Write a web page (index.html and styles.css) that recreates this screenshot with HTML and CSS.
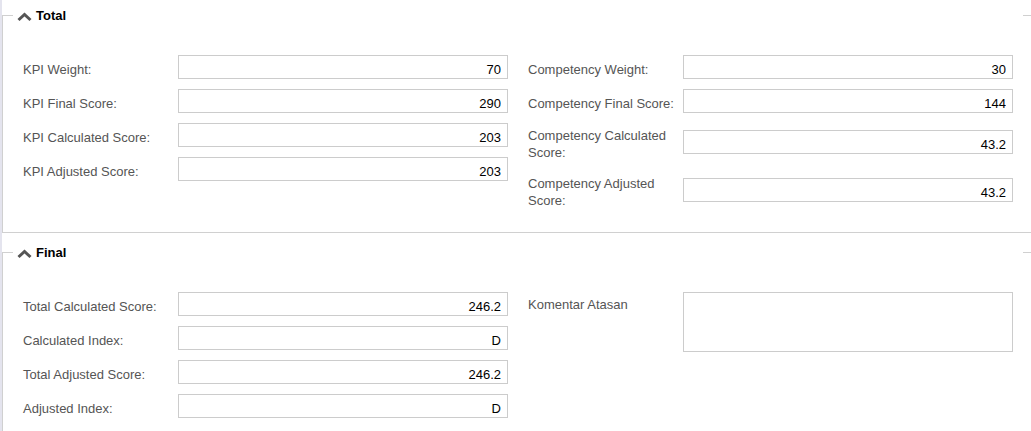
FILE: index.html
```html
<!DOCTYPE html>
<html lang="id">
<head>
  <meta charset="UTF-8" />
  <meta name="viewport" content="width=device-width, initial-scale=1.0"/>
  <title>Appraisal - Total</title>
  <link rel="stylesheet" href="styles.css">
</head>
<body>
  <div class="page">

    <!-- Total -->
    <fieldset class="panel">
      <legend class="panel-title">
        <svg class="chevron" width="15" height="10" viewBox="0 0 15 10"><polyline points="1.5,8 7.5,2.5 13.5,8" /></svg>
        Total
      </legend>
      <div class="columns">
        <div class="col">
          <div class="row"><label class="label">KPI Weight:</label><input class="field" readonly value="70"></div>
          <div class="row"><label class="label">KPI Final Score:</label><input class="field" readonly value="290"></div>
          <div class="row"><label class="label">KPI Calculated Score:</label><input class="field" readonly value="203"></div>
          <div class="row"><label class="label">KPI Adjusted Score:</label><input class="field" readonly value="203"></div>
        </div>
        <div class="col">
          <div class="row"><label class="label">Competency Weight:</label><input class="field" readonly value="30"></div>
          <div class="row"><label class="label">Competency Final Score:</label><input class="field" readonly value="144"></div>
          <div class="row"><label class="label">Competency Calculated Score:</label><input class="field" readonly value="43.2"></div>
          <div class="row"><label class="label">Competency Adjusted Score:</label><input class="field" readonly value="43.2"></div>
        </div>
      </div>
    </fieldset>

    <!-- Final -->
    <fieldset class="panel">
      <legend class="panel-title">
        <svg class="chevron" width="15" height="10" viewBox="0 0 15 10"><polyline points="1.5,8 7.5,2.5 13.5,8" /></svg>
        Final
      </legend>
      <div class="columns">
        <div class="col">
          <div class="row"><label class="label">Total Calculated Score:</label><input class="field" readonly value="246.2"></div>
          <div class="row"><label class="label">Calculated Index:</label><input class="field" readonly value="D"></div>
          <div class="row"><label class="label">Total Adjusted Score:</label><input class="field" readonly value="246.2"></div>
          <div class="row"><label class="label">Adjusted Index:</label><input class="field" readonly value="D"></div>
        </div>
        <div class="col">
          <div class="row row-top"><label class="label">Komentar Atasan</label><textarea class="field comment"></textarea></div>
        </div>
      </div>
    </fieldset>

  </div>
</body>
</html>
```

FILE: styles.css
```css
* { box-sizing: border-box; }

body {
  margin: 0;
  font-family: 'Liberation Sans', Arial, sans-serif;
  background: #fff;
  color: #000;
}

.page {
  min-height: 100vh;
  border-left: 2px solid #e4e4ee;
  overflow: hidden;
}

.panel {
  margin: 6px 0 0;
  border: 1px solid #d0d0d0;
  border-right: none;
  padding: 31px 8px 13px 10px;
  min-width: 0;
}

.panel + .panel {
  margin-top: 10px;
}

.panel-title {
  width: 100%;
  height: 18px;
  padding: 0 4px;
  display: flex;
  align-items: center;
  gap: 4px;
  font-size: 13px;
  font-weight: bold;
  color: #000;
  background: #fff;
}

.chevron {
  margin-top: 3px;
}

.chevron polyline {
  fill: none;
  stroke: #555;
  stroke-width: 3;
}

.columns {
  margin-left: 10px;
  display: grid;
  grid-template-columns: 485px 485px;
  column-gap: 20px;
}

.row {
  display: flex;
  align-items: center;
  margin-bottom: 10px;
}

.row-top {
  align-items: flex-start;
}

.label {
  flex: none;
  width: 155px;
  padding-top: 4px;
  padding-right: 4px;
  font-size: 13px;
  line-height: 17px;
  color: #555;
}

.field {
  flex: none;
  width: 330px;
  height: 24px;
  margin: 0;
  border: 1px solid #ccc;
  border-radius: 0;
  padding: 4px 6px 0;
  font: 13px 'Liberation Sans', Arial, sans-serif;
  color: #000;
  text-align: right;
  background: #fff;
  outline: none;
}

.comment {
  height: 60px;
  resize: none;
  text-align: left;
}
```
